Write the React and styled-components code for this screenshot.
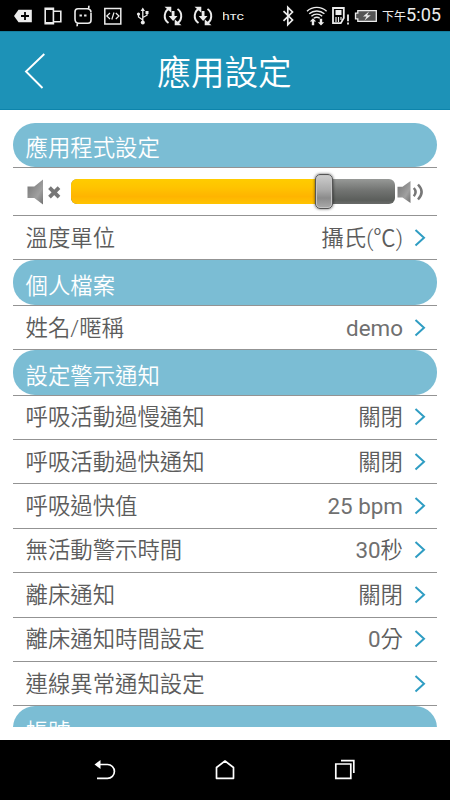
import * as React from 'react';
import styled, { createGlobalStyle } from 'styled-components';

const GlobalStyle = createGlobalStyle`
   * {
      box-sizing: border-box;
   }

   body {
      margin: 0;
      background: #fff;
   }
`;

const Screen = styled.div`
   display: flex;
   flex-direction: column;
   width: 450px;
   height: 800px;
   overflow: hidden;
   background: #fff;
   font-family: Roboto, 'Noto Sans CJK TC', sans-serif;
   font-weight: 350;
   color: #5c5c5c;
`;

const StatusBar = styled.header`
   display: flex;
   align-items: center;
   flex: none;
   height: 31px;
   padding-left: 13px;
   background: #000;
   color: #ececec;

   svg {
      display: block;
      flex: none;
   }
`;

const StatusIcon = styled.svg.attrs((props) => ({
   width: props.$width || 20,
   height: 22,
   viewBox: `0 0 ${props.$width || 20} 22`,
   fill: 'none',
   stroke: 'currentColor',
   strokeWidth: 1.6,
}))`
   margin-right: ${(props) => props.$gap || 10}px;
`;

const Clock = styled.div`
   display: flex;
   align-items: baseline;
   padding-top: 1px;
   font-size: 18.2px;
   font-weight: 400;
   line-height: 31px;
   white-space: nowrap;

   small {
      font-size: 12px;
   }
`;

const TitleBar = styled.div`
   display: flex;
   align-items: center;
   flex: none;
   height: 79px;
   padding: 0 24px;
   border-top: 1px solid #167f9f;
   border-bottom: 1px solid #0d84ab;
   background: #1d92b7;
   color: #fff;

   svg {
      flex: none;
   }

   h1 {
      flex: 1;
      margin: 0 23px 0 0;
      padding-top: 6px;
      font-size: 33.6px;
      font-weight: 350;
      line-height: 44px;
      text-align: center;
   }
`;

const Settings = styled.main`
   flex: none;
   height: 604.8px;
   margin: 12.6px 13px 12.6px;
   overflow: hidden;
`;

const SectionTitle = styled.div`
   height: 45.5px;
   border-bottom: 1px solid #939393;

   h2 {
      height: 100%;
      margin: 0;
      padding: 5.8px 12.5px 0;
      border-radius: 22px;
      background: #7bbdd4;
      color: #fff;
      font-size: 22.4px;
      font-weight: 350;
      line-height: 40px;
   }
`;

const Row = styled.div`
   display: flex;
   align-items: center;
   height: 44.35px;
   padding: 0 11px 0 12.5px;
   border-bottom: 1px solid #939393;
   font-size: 22.4px;
   line-height: 40px;
   white-space: nowrap;

   svg {
      flex: none;
      margin-left: 11px;
   }
`;

const Value = styled.span`
   margin-left: auto;
   white-space: pre;
`;

const Latin = styled.span`
   color: #707070;
   font-weight: 400;
`;

const VolumeRow = styled.div`
   display: flex;
   align-items: center;
   height: 48px;
   padding-left: 14px;
   border-bottom: 1px solid #939393;

   svg {
      flex: none;
   }
`;

const Track = styled.div`
   display: flex;
   align-items: center;
   width: 324px;
   height: 25px;
   margin: 0 2px 0 10px;
   border-radius: 6px;
   background: linear-gradient(#979997, #727472 45%, #5b5e5b 85%, #696b69);
`;

const Filled = styled.div`
   height: 25px;
   border-radius: 6px 0 0 6px;
   background: linear-gradient(#ffcc00, #ffc300 35%, #ffb400 70%, #ffc400);
`;

const Thumb = styled.div`
   flex: none;
   width: 18px;
   height: 35px;
   margin-left: -9px;
   border: 1px solid #555;
   border-radius: 5px;
   background: linear-gradient(#cdcdcd, #aaa 45%, #8b8b8b 70%, #aaa);
   box-shadow: 0 0 3px rgba(0, 0, 0, 0.65), inset 0 0 0 1px #c4c4c4;
`;

const NavBar = styled.nav`
   display: flex;
   align-items: center;
   justify-content: space-between;
   flex: none;
   height: 60px;
   padding: 0 94px 0 94px;
   background: #000;
`;

const Sync = () => (
   <StatusIcon>
      <path d="M7 3.2A8.4 8.4 0 0 0 5.5 18M13 18.8A8.4 8.4 0 0 0 14.5 4" strokeWidth="2" />
      <path d="M1.5 1.8h6.8v6zM18.5 20.2h-6.8v-6z" fill="currentColor" stroke="none" />
      <path d="M8.7 6h2.8v5h3L10.1 16l-4.4-5h3z" fill="currentColor" stroke="none" />
   </StatusIcon>
);

const StatusIcons = () => (
   <>
      <StatusIcon>
         <path d="M1 11l4.5-6.3h13.3v12.600H5.500z" fill="currentColor" stroke="none" />
         <path d="M8 11h8M12 7v8" stroke="#000" strokeWidth="1.8" />
      </StatusIcon>
      <StatusIcon>
         <path d="M2.2 3.2h8.2v15.6H2.2zM10.4 6.2h7.4v10.6h-7.4" />
         <path d="M2 4h8M2 18h8" strokeWidth="2" />
      </StatusIcon>
      <StatusIcon>
         <path d="M15.5.8c.8 1 .3 2.900-1 2.900H5a3 3 0 0 0-3 3V14M4.500 21.200c-.8-1-.3-2.900 1-2.900H15a3 3 0 0 0 3-3V8M14 3.700c2.800 0 4 1.300 4 3.800M2 14c0 3 1.300 4.300 4 4.300" />
         <path d="M6.5 10.5h2.4M11.1 10.5h2.4" strokeWidth="2.2" />
      </StatusIcon>
      <StatusIcon>
         <path d="M1.8 3.5h16V19h-16z" strokeWidth="1.5" />
         <path d="M7 8l-3.2 3L7 14M12.8 8l3.2 3-3.2 3M11 7.5l-2.2 7" strokeWidth="1.2" />
      </StatusIcon>
      <StatusIcon>
         <path d="M9.800 4v14M9.800 15L5.500 12V9M9.800 12.500l4.200-2.300V7.500" strokeWidth="1.3" />
         <path d="M7.600 6l2.200-3.500L12 6zM12.500 6h3v3h-3z" fill="currentColor" stroke="none" />
         <circle cx="5.5" cy="9" r="1.6" fill="currentColor" stroke="none" />
         <circle cx="9.8" cy="17.6" r="2" fill="currentColor" stroke="none" />
      </StatusIcon>
      <Sync />
      <Sync />
      <StatusIcon $width={22} $gap={37}>
         <text x="-1" y="14.5" fill="currentColor" stroke="none" fontSize="10" fontWeight="400" textLength="22" lengthAdjust="spacingAndGlyphs">
            hтc
         </text>
      </StatusIcon>
      <StatusIcon $width={12} $gap={12}>
         <path d="M1.500 6.200l9 8.800-4.700 4.700V2.300L10.500 7l-9 8.800" strokeWidth="1.7" />
      </StatusIcon>
      <StatusIcon $width={22} $gap={4}>
         <path d="M1 6.200a14.500 14.500 0 0 1 19.600 0M3.200 8.800a11.500 11.500 0 0 1 15.200 0M5.400 11.200a8 8 0 0 1 10.800 0M7.800 13.300a5 5 0 0 1 6 0" strokeWidth="1.4" />
         <path d="M7 13.200l3.200 3.300H8.200v3.700H5.800v-3.700h-2zM15 20.500l-3.200-3.300h2v-3.400h2.400v3.400h2z" fill="currentColor" stroke="none" />
      </StatusIcon>
      <StatusIcon $width={18} $gap={4}>
         <path d="M1 3h10.800v10l-3 5.200H1z" strokeWidth="1.8" />
         <path d="M3.500 5h6v5h-6z" fill="currentColor" stroke="none" />
         <path d="M4 12v5M6.500 12v5M9 12v3" strokeWidth="1.2" />
         <path d="M16 9.500v6.700M16 17.500v2" strokeWidth="1.8" />
      </StatusIcon>
      <StatusIcon $width={24} $gap={4}>
         <path d="M3.800 5.700h18.500v10.600H3.800v-2.500H1.500V8.200h2.300z" fill="#555" strokeWidth="1.3" />
         <path d="M15 6.500l-6 5h3.600L10.500 15.500l6.300-5.200h-3.700z" fill="currentColor" stroke="none" />
      </StatusIcon>
   </>
);

const Chevron = () => (
   <svg width="12" height="18" viewBox="0 0 12 18" fill="none" stroke="#2f9dc3" strokeWidth="2">
      <path d="M1.500 1L10 8.800l-8.500 7.800" />
   </svg>
);

const Speaker = ({ muted }) => (
   <svg width={muted ? 34 : 28} height="26" viewBox={muted ? '0 0 34 26' : '0 0 28 26'}>
      <defs>
         <linearGradient id="speaker" x2="1" y2="1">
            <stop stopColor="#737373" />
            <stop offset=".65" stopColor="#a0a0a0" />
            <stop offset="1" stopColor="#707070" />
         </linearGradient>
      </defs>
      {muted ? (
         <>
            <path d="M.5 7.500h6.800L16 .5v25l-8.700-6.500H.5z" fill="url(#speaker)" />
            <path d="M22.500 8.700l9.500 9.500M32 8.700l-9.500 9.500" stroke="#777" strokeWidth="3.8" />
         </>
      ) : (
         <>
            <path d="M.5 7.800h5L13.500 2v22l-8-5.500h-5z" fill="url(#speaker)" />
            <path d="M16.800 9q3.600 4 0 8.200M21 5.500q7.200 7.500 0 15" fill="none" stroke="#777" strokeWidth="2.5" />
         </>
      )}
   </svg>
);

const sections = [
   {
      title: '應用程式設定',
      volume: 78.2,
      rows: [['溫度單位', '攝氏(℃)']],
   },
   {
      title: '個人檔案',
      rows: [['姓名/暱稱', 'demo']],
   },
   {
      title: '設定警示通知',
      rows: [
         ['呼吸活動過慢通知', '關閉'],
         ['呼吸活動過快通知', '關閉'],
         ['呼吸過快值', '25 bpm'],
         ['無活動警示時間', '30秒'],
         ['離床通知', '關閉'],
         ['離床通知時間設定', '0分'],
         ['連線異常通知設定', ''],
      ],
   },
   { title: '帳號', rows: [] },
];

const Volume = ({ level }) => (
   <VolumeRow>
      <Speaker muted />
      <Track>
         <Filled style={{ width: `${level}%` }} />
         <Thumb />
      </Track>
      <Speaker />
   </VolumeRow>
);

// latin letters and digits sit a step heavier than the chinese text
const renderValue = (value) =>
   value.split(/([\w ]+)/).map((part, i) => (i % 2 ? <Latin key={i}>{part}</Latin> : part));

const Section = ({ title, volume, rows }) => (
   <section>
      <SectionTitle>
         <h2>{title}</h2>
      </SectionTitle>
      {volume && <Volume level={volume} />}
      {rows.map(([label, value]) => (
         <Row key={label}>
            <span>{label}</span>
            <Value>{renderValue(value)}</Value>
            <Chevron />
         </Row>
      ))}
   </section>
);

export default function App() {
   return (
      <Screen lang="zh-Hant">
         <GlobalStyle />
         <StatusBar>
            <StatusIcons />
            <Clock>
               <small>下午</small>5:05
            </Clock>
         </StatusBar>
         <TitleBar>
            <svg width="22" height="38" viewBox="0 0 22 38" fill="none" stroke="#fff" strokeWidth="1.9">
               <path d="M20.300 2L2 19.500 18.500 36" />
            </svg>
            <h1>應用設定</h1>
         </TitleBar>
         <Settings>
            {sections.map((section) => (
               <Section key={section.title} {...section} />
            ))}
         </Settings>
         <NavBar>
            <svg width="22" height="22" viewBox="0 0 22 22" fill="none" stroke="#fff" strokeWidth="1.7">
               <path d="M4 5.500h9.500a6.800 6.800 0 0 1 0 13.800H3" />
               <path d="M.5 5.500L6.500 1v9z" fill="#fff" stroke="none" />
            </svg>
            <svg width="22" height="22" viewBox="0 0 22 22" fill="none" stroke="#fff" strokeWidth="1.7">
               <path d="M2.500 19.300V8.500L11 2l8.500 6.500v10.800z" strokeLinejoin="round" />
            </svg>
            <svg width="22" height="22" viewBox="0 0 22 22" fill="none" stroke="#fff" strokeWidth="1.7">
               <path d="M1.800 5h15v14.300h-15zM7 1.700h12.800V14" />
            </svg>
         </NavBar>
      </Screen>
   );
}
